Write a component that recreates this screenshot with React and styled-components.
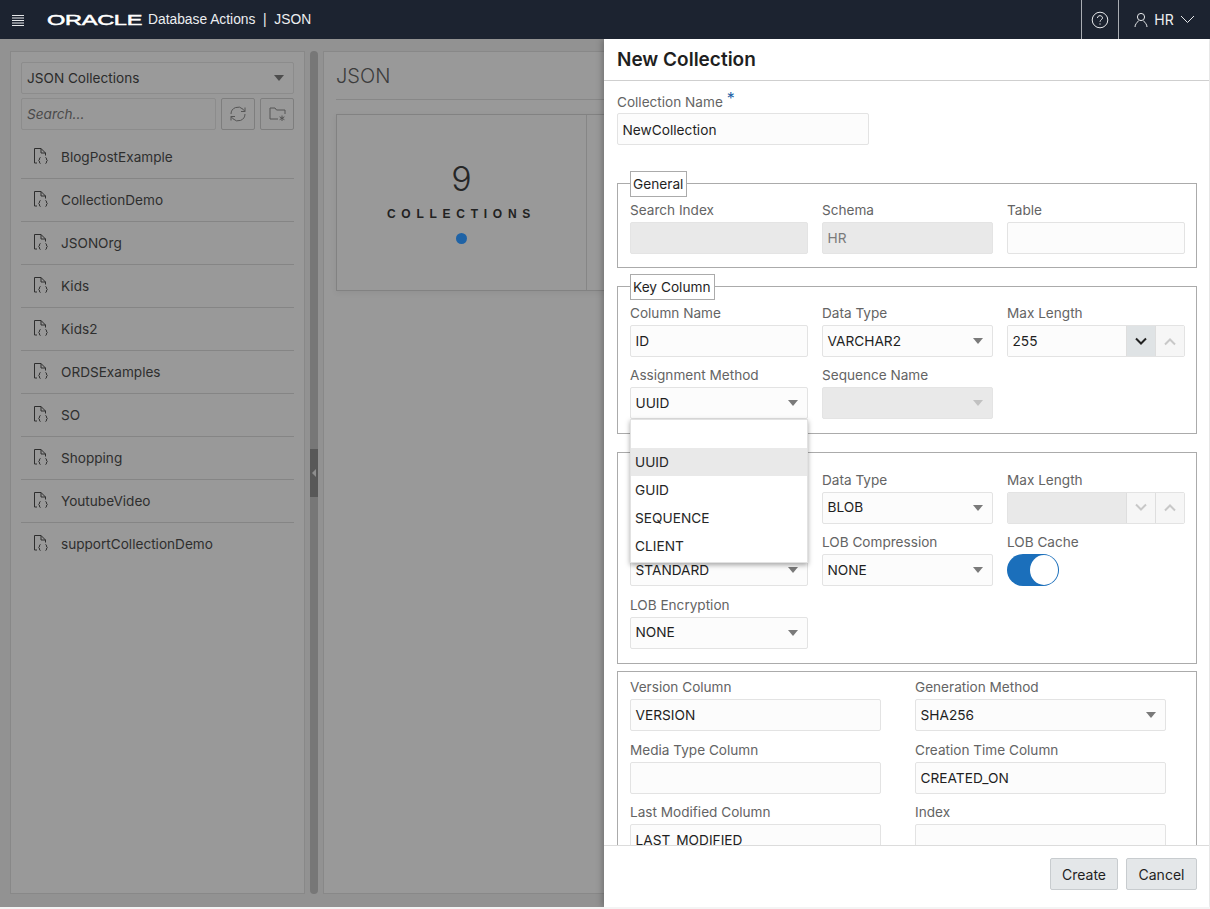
import React from "react";
import styled, { createGlobalStyle } from "styled-components";

const GlobalStyle = createGlobalStyle`
	html, body {
		margin: 0;
		padding: 0;
		background: #f4f4f4;
		font-family: Inter, "Liberation Sans", sans-serif;
		overflow: hidden;
	}
	* {
		box-sizing: border-box;
	}
`;

const Page = styled.div`
	position: relative;
	width: 1210px;
	height: 907px;
	overflow: hidden;
`;

const TopBar = styled.header`
	height: 39px;
	background: #1c2330;
	color: #fff;
	display: flex;
	align-items: center;
	position: relative;
	z-index: 5;
`;
const Burger = styled.svg`
	width: 12px;
	height: 12px;
	margin-left: 12px;
	flex-shrink: 0;
`;
const OracleMark = styled.span`
	display: block;
	width: 94px;
	margin-left: 23px;
	font-family: "Liberation Sans", sans-serif;
	font-size: 15.5px;
	line-height: 16px;
	font-weight: 400;
	-webkit-text-stroke: 0.5px #fff;
	white-space: nowrap;
	transform-origin: left center;
	transform: scaleX(1.52);
	letter-spacing: -0.2px;
`;
const AppName = styled.span`
	font-family: "Liberation Sans", sans-serif;
	font-size: 13.8px;
	color: #eceef0;
	margin-left: 7px;
	white-space: nowrap;
`;
const BarSpacer = styled.div`
	flex-grow: 1;
`;
const BarCell = styled.div`
	height: 39px;
	width: ${(p) => p.$w}px;
	border-left: 1px solid #a9adb3;
	display: flex;
	align-items: center;
	justify-content: center;
	font-size: 14px;
	color: #eceef0;
	gap: 6px;
`;

const Backdrop = styled.div`
	position: absolute;
	inset: 39px 1px 0 0;
	background: #929292;
`;
const SidePanel = styled.aside`
	position: absolute;
	left: 10px;
	top: 12px;
	width: 295px;
	height: 843px;
	background: #999;
	border: 1px solid #888;
	padding: 10px;
`;
const Splitter = styled.div`
	position: absolute;
	left: 310px;
	top: 12px;
	width: 8px;
	height: 843px;
	background: #777;
	border-radius: 4px;
`;
const SplitterHandle = styled.div`
	position: absolute;
	left: 0;
	top: 398px;
	width: 8px;
	height: 48px;
	background: #585858;
	&::after {
		content: "";
		position: absolute;
		left: 2px;
		top: 20px;
		border-style: solid;
		border-width: 4px 4px 4px 0;
		border-color: transparent #8e8e8e transparent transparent;
	}
`;
const MainPanel = styled.main`
	position: absolute;
	left: 323px;
	top: 12px;
	width: 300px;
	height: 843px;
	background: #999;
	border: 1px solid #888;
	padding: 0 0 0 12px;
`;
const MainTitle = styled.h1`
	margin: 0;
	height: 48px;
	border-bottom: 1px solid #878787;
	font-size: 20px;
	line-height: 48px;
	font-weight: 300;
	color: #3c3c3c;
`;
const StatCard = styled.section`
	margin-top: 14px;
	width: 300px;
	height: 177px;
	border: 1px solid #828282;
	display: grid;
	grid-template-columns: 250px 1fr;
	box-shadow: 0 2px 6px rgba(0, 0, 0, 0.06);
`;
const StatCell = styled.div`
	display: flex;
	flex-direction: column;
	align-items: center;
	border-right: 1px solid #868686;
	padding-top: 43px;
`;
const StatValue = styled.div`
	font-size: 34px;
	line-height: 42px;
	font-weight: 300;
	color: #262626;
`;
const StatLabel = styled.div`
	font-family: "Liberation Sans", sans-serif;
	font-size: 12px;
	font-weight: 700;
	letter-spacing: 5.75px;
	line-height: 14px;
	margin-top: 7px;
	color: #222;
`;
const StatDot = styled.div`
	width: 11px;
	height: 11px;
	margin-top: 12px;
	border-radius: 50%;
	background: #1f63a6;
`;

const SideSelect = styled.div`
	height: 32px;
	border: 1px solid #8c8c8c;
	background: #9a9a9a;
	border-radius: 2px;
	display: flex;
	align-items: center;
	justify-content: space-between;
	padding: 0 9px 0 5px;
	font-size: 13.6px;
	color: #2b2b2b;
`;
const SideTools = styled.div`
	display: flex;
	margin-top: 4px;
`;
const SideSearch = styled.div`
	width: 195px;
	height: 32px;
	border: 1px solid #8c8c8c;
	border-radius: 2px;
	padding: 0 5px;
	line-height: 30px;
	font-size: 13.6px;
	font-style: italic;
	color: #4a4a4a;
`;
const ToolButton = styled.div`
	width: 34px;
	height: 32px;
	margin-left: ${(p) => p.$gap}px;
	border: 1px solid #7e7e7e;
	border-radius: 2px;
	display: flex;
	align-items: center;
	justify-content: center;
`;
const CollectionList = styled.ul`
	list-style: none;
	margin: 6px 0 0;
	padding: 0;
`;
const CollectionItem = styled.li`
	height: 43px;
	display: flex;
	align-items: center;
	padding-left: 12px;
	font-size: 13.6px;
	color: #2e2e2e;
	border-bottom: 1px solid ${(p) => (p.$last ? "transparent" : "#858585")};
`;
const DocIcon = styled.svg`
	width: 16px;
	height: 17px;
	margin: -3px 12px 0 0;
	flex-shrink: 0;
`;

const Drawer = styled.aside`
	position: absolute;
	left: 604px;
	top: 39px;
	width: 605px;
	height: 868px;
	background: #fff;
	box-shadow: -2px 0 6px rgba(0, 0, 0, 0.25);
	z-index: 3;
`;
const DrawerHeader = styled.div`
	height: 42px;
	border-bottom: 1px solid #cfcfcf;
	padding-left: 13px;
	font-size: 19px;
	font-weight: 600;
	line-height: 41px;
	color: #1f1f1f;
`;
const DrawerBody = styled.div`
	position: absolute;
	left: 0;
	right: 0;
	top: 42px;
	height: 764px;
	overflow: hidden;
	padding: 9px 13px 0;
`;
const DrawerFooter = styled.div`
	position: absolute;
	left: 0;
	right: 0;
	top: 806px;
	height: 62px;
	border-top: 1px solid #dcdcdc;
	display: flex;
	justify-content: flex-end;
	gap: 8px;
	padding: 12px 12px 0 0;
`;
const FooterButton = styled.button`
	width: ${(p) => p.$w}px;
	height: 32px;
	background: #e4e7e9;
	border: 1px solid #c8cccf;
	border-radius: 2px;
	font-family: inherit;
	font-size: 14px;
	color: #1f1f1f;
	padding: 0;
`;

const FieldLabel = styled.div`
	font-size: 13.6px;
	line-height: 20px;
	min-height: 20px;
	color: #646464;
	margin-bottom: 2px;
	white-space: nowrap;
`;
const NameLabel = styled(FieldLabel)`
	line-height: 22px;
	margin-bottom: 0;
`;
const Required = styled.span`
	color: #1f63a6;
	margin-left: 4px;
	font-size: 16px;
	position: relative;
	top: -3px;
`;
const TextBox = styled.div`
	height: 32px;
	background: ${(p) => (p.$disabled ? "#e9e9e9" : "#fcfcfc")};
	border: 1px solid ${(p) => (p.$disabled ? "#e4e4e4" : "#e3e3e3")};
	border-radius: 2px;
	padding: 0 4.5px;
	font-size: 13.7px;
	line-height: 31px;
	color: ${(p) => (p.$disabled ? "#7b7b7b" : "#1f1f1f")};
	overflow: hidden;
`;
const NameBox = styled(TextBox)`
	width: 252px;
	line-height: 33px;
`;
const SelectBox = styled(TextBox)`
	display: flex;
	justify-content: space-between;
	align-items: center;
	padding-right: 9px;
`;
const Caret = styled.span`
	width: 0;
	height: 0;
	border-style: solid;
	border-width: 6px 5px 0 5px;
	border-color: ${(p) => p.$color || "#7a7a7a"} transparent transparent;
	flex-shrink: 0;
`;
const Spinner = styled.div`
	display: grid;
	grid-template-columns: 1fr 29px 29px;
	height: 32px;
	border: 1px solid #e3e3e3;
	border-radius: 2px;
	overflow: hidden;
`;
const SpinnerValue = styled.div`
	padding: 0 4.5px;
	font-size: 13.7px;
	line-height: 31px;
	color: #1f1f1f;
	background: ${(p) => (p.$disabled ? "#e9e9e9" : "#fcfcfc")};
`;
const SpinnerStep = styled.div`
	display: flex;
	align-items: center;
	justify-content: center;
	background: ${(p) => (p.$active ? "#dfe3e5" : "#f6f6f6")};
	border-left: 1px solid #dedede;
`;
const Toggle = styled.div`
	width: 52px;
	height: 32px;
	border-radius: 16px;
	background: #1b6fbb;
	position: relative;
	&::after {
		content: "";
		position: absolute;
		right: 1px;
		top: 1px;
		width: 28px;
		height: 30px;
		border-radius: 50%;
		background: #fff;
	}
`;

const Group = styled.fieldset`
	display: block;
	position: relative;
	margin: ${(p) => p.$top}px 0 0;
	padding: ${(p) => p.$pad}px 12px 14px;
	width: 580px;
	height: ${(p) => (p.$h ? `${p.$h}px` : "auto")};
	border: 1px solid #ababab;
	min-width: 0;
`;
const GroupLegend = styled.div`
	position: absolute;
	left: 12px;
	top: -13px;
	height: 26px;
	padding: 0 3px 0 2px;
	background: #fff;
	border: 1px solid #ababab;
	font-size: 13.7px;
	line-height: 24px;
	color: #1f1f1f;
`;
const ThreeCols = styled.div`
	display: grid;
	grid-template-columns: 178px 171px 178px;
	column-gap: 14px;
	row-gap: ${(p) => p.$gap}px;
`;
const TwoCols = styled.div`
	display: grid;
	grid-template-columns: 251px 251px;
	column-gap: 34px;
	row-gap: 8.7px;
`;
const Popup = styled.ul`
	position: absolute;
	left: 12px;
	top: 132px;
	width: 178px;
	margin: 0;
	padding: 28px 0 2px;
	list-style: none;
	background: #fff;
	border: 1px solid #e2e2e2;
	box-shadow: 0 2px 5px rgba(0, 0, 0, 0.35);
	z-index: 2;
`;
const PopupItem = styled.li`
	height: 28px;
	padding-left: 4px;
	font-size: 13.7px;
	line-height: 28px;
	color: #262626;
	background: ${(p) => (p.$active ? "#e9e9e9" : "transparent")};
`;

const collections = [
	"BlogPostExample",
	"CollectionDemo",
	"JSONOrg",
	"Kids",
	"Kids2",
	"ORDSExamples",
	"SO",
	"Shopping",
	"YoutubeVideo",
	"supportCollectionDemo",
];

function DocumentGlyph() {
	return (
		<DocIcon viewBox="0 0 16 17" fill="none" stroke="#2e2e2e" strokeWidth="1">
			<path d="M4 16H1.5V1.5H8L12.5 6V8.5M8 1.5V6H12.5" />
			<path d="M7.5 10.5C5.8 10.5 7.2 13.2 5.6 13.5C7.2 13.8 5.8 16.5 7.5 16.5" />
			<path d="M12.5 10.5C14.2 10.5 12.8 13.2 14.4 13.5C12.8 13.8 14.2 16.5 12.5 16.5" />
		</DocIcon>
	);
}

function Chevron({ up, color }) {
	return (
		<svg width="14" height="9" viewBox="0 0 14 9" fill="none" stroke={color} strokeWidth="2">
			<path d={up ? "M2 7.5L7 2.5L12 7.5" : "M2 1.5L7 6.5L12 1.5"} />
		</svg>
	);
}

function Field({ label, children }) {
	return (
		<div>
			<FieldLabel>{label}</FieldLabel>
			{children}
		</div>
	);
}

function Select({ label, value, disabled }) {
	return (
		<Field label={label}>
			<SelectBox $disabled={disabled}>
				<span>{value}</span>
				<Caret $color={disabled ? "#c1c1c1" : undefined} />
			</SelectBox>
		</Field>
	);
}

function Input({ label, value, disabled }) {
	return (
		<Field label={label}>
			<TextBox $disabled={disabled}>{value}</TextBox>
		</Field>
	);
}

function App() {
	return (
		<Page>
			<GlobalStyle />
			<TopBar>
				<Burger viewBox="0 0 12 12" stroke="#e6e8ea" strokeWidth="1">
					<path d="M0 1.5H12M0 4H12M0 6.5H12M0 9H12M0 11.5H12" />
				</Burger>
				<OracleMark>ORACLE</OracleMark>
				<AppName>Database Actions&nbsp;&nbsp;|&nbsp;&nbsp;JSON</AppName>
				<BarSpacer />
				<BarCell $w={37}>
					<svg width="18" height="18" viewBox="0 0 18 18" fill="none" stroke="#e6e8ea" strokeWidth="1">
						<circle cx="9" cy="9" r="7.8" />
						<path d="M6.5 7C6.5 5.5 7.6 4.7 9 4.7C10.4 4.7 11.5 5.6 11.5 6.9C11.5 8.6 9 8.8 9 10.8" />
						<path d="M9 12.4V13.6" />
					</svg>
				</BarCell>
				<BarCell $w={92}>
					<svg width="14" height="16" viewBox="0 0 14 16" fill="none" stroke="#e6e8ea" strokeWidth="1">
						<circle cx="7" cy="5" r="3.6" />
						<path d="M1 15C1 12.2 3 10.8 4.7 8.6M13 15C13 12.2 11 10.8 9.3 8.6" />
					</svg>
					<span>HR</span>
					<svg width="15" height="9" viewBox="0 0 15 9" fill="none" stroke="#e6e8ea" strokeWidth="1">
						<path d="M1 1L7.5 7.5L14 1" />
					</svg>
				</BarCell>
			</TopBar>

			<Backdrop>
				<SidePanel>
					<SideSelect>
						<span>JSON Collections</span>
						<Caret $color="#4d4d4d" />
					</SideSelect>
					<SideTools>
						<SideSearch>Search...</SideSearch>
						<ToolButton $gap={5}>
							<svg width="16" height="16" viewBox="0 0 16 16" fill="none" stroke="#555" strokeWidth="1">
								<path d="M1 8A7 7 0 0 1 13 3.2L15 5.5M15 8A7 7 0 0 1 3 12.8L1 10.5" />
								<path d="M15 1.5V5.5H11M1 14.5V10.5H5" />
							</svg>
						</ToolButton>
						<ToolButton $gap={5}>
							<svg width="17" height="15" viewBox="0 0 17 15" fill="none" stroke="#555" strokeWidth="1">
								<path d="M9 12H1V1H6L7.5 3H16V7" />
								<path d="M13 8.5V14M10.6 9.8L15.4 12.7M15.4 9.8L10.6 12.7" />
							</svg>
						</ToolButton>
					</SideTools>
					<CollectionList>
						{collections.map((name, i) => (
							<CollectionItem key={name} $last={i === collections.length - 1}>
								<DocumentGlyph />
								{name}
							</CollectionItem>
						))}
					</CollectionList>
				</SidePanel>
				<Splitter>
					<SplitterHandle />
				</Splitter>
				<MainPanel>
					<MainTitle>JSON</MainTitle>
					<StatCard>
						<StatCell>
							<StatValue>9</StatValue>
							<StatLabel>COLLECTIONS</StatLabel>
							<StatDot />
						</StatCell>
					</StatCard>
				</MainPanel>
			</Backdrop>

			<Drawer>
				<DrawerHeader>New Collection</DrawerHeader>
				<DrawerBody>
					<NameLabel>
						Collection Name<Required>*</Required>
					</NameLabel>
					<NameBox>NewCollection</NameBox>

					<Group $top={38} $pad={16} $h={85}>
						<GroupLegend>General</GroupLegend>
						<ThreeCols $gap={8}>
							<Input label="Search Index" disabled />
							<Input label="Schema" value="HR" disabled />
							<Input label="Table" />
						</ThreeCols>
					</Group>

					<Group $top={18} $pad={16} $h={148}>
						<GroupLegend>Key Column</GroupLegend>
						<ThreeCols $gap={8}>
							<Input label="Column Name" value="ID" />
							<Select label="Data Type" value="VARCHAR2" />
							<Field label="Max Length">
								<Spinner>
									<SpinnerValue>255</SpinnerValue>
									<SpinnerStep $active>
										<Chevron color="#222" />
									</SpinnerStep>
									<SpinnerStep>
										<Chevron up color="#c8c8c8" />
									</SpinnerStep>
								</Spinner>
							</Field>
							<Select label="Assignment Method" value="UUID" />
							<Select label="Sequence Name" disabled />
						</ThreeCols>
						<Popup>
							<PopupItem $active>UUID</PopupItem>
							<PopupItem>GUID</PopupItem>
							<PopupItem>SEQUENCE</PopupItem>
							<PopupItem>CLIENT</PopupItem>
						</Popup>
					</Group>

					<Group $top={18} $pad={16.6} $h={212}>
						<ThreeCols $gap={8.5}>
							<Input />
							<Select label="Data Type" value="BLOB" />
							<Field label="Max Length">
								<Spinner>
									<SpinnerValue $disabled />
									<SpinnerStep>
										<Chevron color="#c8c8c8" />
									</SpinnerStep>
									<SpinnerStep>
										<Chevron up color="#c8c8c8" />
									</SpinnerStep>
								</Spinner>
							</Field>
							<Select value="STANDARD" />
							<Select label="LOB Compression" value="NONE" />
							<Field label="LOB Cache">
								<Toggle />
							</Field>
							<Select label="LOB Encryption" value="NONE" />
						</ThreeCols>
					</Group>

					<Group $top={7} $pad={5}>
						<TwoCols>
							<Input label="Version Column" value="VERSION" />
							<Select label="Generation Method" value="SHA256" />
							<Input label="Media Type Column" />
							<Input label="Creation Time Column" value="CREATED_ON" />
							<Input label="Last Modified Column" value="LAST_MODIFIED" />
							<Input label="Index" />
						</TwoCols>
					</Group>
				</DrawerBody>
				<DrawerFooter>
					<FooterButton $w={68}>Create</FooterButton>
					<FooterButton $w={71}>Cancel</FooterButton>
				</DrawerFooter>
			</Drawer>
		</Page>
	);
}

export default App;
